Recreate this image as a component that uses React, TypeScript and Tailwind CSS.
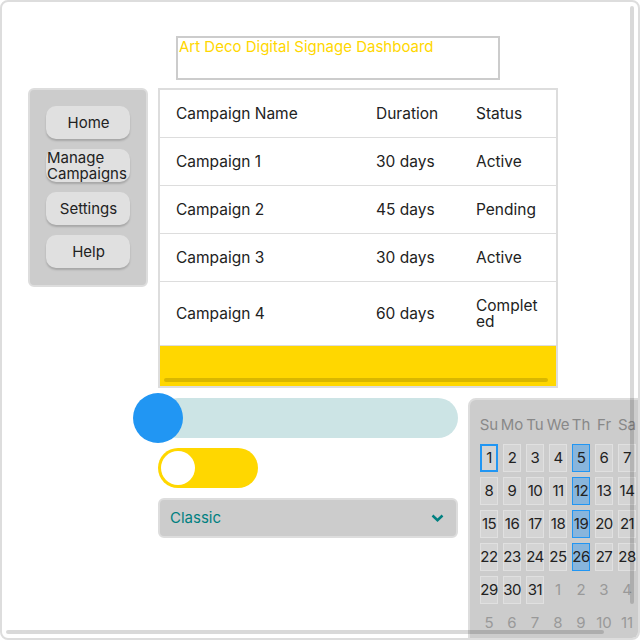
import React from "react";

const font = { fontFamily: "Inter, 'Noto Sans', sans-serif" };

const rows = [
  { name: "Campaign 1", duration: "30 days", status: "Active" },
  { name: "Campaign 2", duration: "45 days", status: "Pending" },
  { name: "Campaign 3", duration: "30 days", status: "Active" },
  { name: "Campaign 4", duration: "60 days", status: "Completed" },
];

const navItems = ["Home", "Manage Campaigns", "Settings", "Help"];

function Sidebar() {
  return (
    <nav className="w-[120px] shrink-0 self-start rounded-md border-2 border-[#ddd] bg-[#ccc] px-4 pt-4 pb-[17px] flex flex-col gap-[10px]">
      {navItems.map((item) => (
        <button
          key={item}
          className="h-[33px] w-[84px] rounded-[10px] bg-[#e0e0e0] shadow-[0_2px_2px_rgba(0,0,0,0.18)] flex items-center justify-center text-[15px] leading-[16px] text-[#222]"
        >
          <span className="inline-block max-w-[84px] pl-px text-left">{item}</span>
        </button>
      ))}
    </nav>
  );
}

function CampaignTable() {
  return (
    <div className="relative w-[400px] h-[300px] border-2 border-[#ddd] bg-[#FFD700] overflow-hidden">
      <div className="bg-white text-[15.5px] text-[#222]">
        <div className="flex h-[48px] items-center border-b border-[#ddd]">
          <div className="w-[200px] px-4">Campaign Name</div>
          <div className="w-[100px] px-4">Duration</div>
          <div className="w-[95px] px-4">Status</div>
        </div>
        {rows.map((r, i) => (
          <div
            key={r.name}
            className={`flex items-center border-b border-[#ddd] ${i === 3 ? "h-[64px]" : "h-[48px]"}`}
          >
            <div className="w-[200px] px-4">{r.name}</div>
            <div className="w-[100px] px-4">{r.duration}</div>
            <div className="w-[95px] px-4 break-all leading-[16px]">{r.status}</div>
          </div>
        ))}
      </div>
      {/* horizontal scrollbar thumb */}
      <div className="absolute left-[4px] bottom-[4px] h-[4px] w-[384px] rounded-full bg-black/15" />
    </div>
  );
}

function Controls() {
  return (
    <div className="w-[300px] flex flex-col gap-[10px]">
      <div className="relative h-[40px] w-[300px] rounded-full bg-[#cce4e5]">
        <div className="absolute left-[-25px] top-[-5px] h-[50px] w-[50px] rounded-full bg-[#2196F3]" />
      </div>
      <div className="h-[40px] w-[100px] rounded-full bg-[#FFD700] p-[3px]">
        <div className="h-[34px] w-[34px] rounded-full bg-white" />
      </div>
      <div className="h-[40px] w-[300px] rounded-md border-2 border-[#ddd] bg-[#ccc] flex items-center justify-between pl-[10px] pr-[12px]">
        <span className="text-[15px] text-[#008080]">Classic</span>
        <svg width="13" height="8" viewBox="0 0 13 8">
          <polyline points="1.5,1.5 6.5,6.2 11.5,1.5" fill="none" stroke="#008080" strokeWidth="2.5" />
        </svg>
      </div>
    </div>
  );
}

const days = ["Su", "Mo", "Tu", "We", "Th", "Fr", "Sa"];

function Calendar() {
  const cells: { n: number; cur: boolean }[] = [];
  for (let d = 1; d <= 31; d++) cells.push({ n: d, cur: true });
  for (let d = 1; d <= 11; d++) cells.push({ n: d, cur: false });

  return (
    <div className="w-[180px] shrink-0 rounded-tl-lg border-2 border-[#ddd] bg-[#ccc] pl-[10px] pt-[18px] pb-4">
      <div className="grid grid-cols-[repeat(7,18px)] gap-x-[5px] gap-y-[5px] text-[15px]">
        {days.map((d) => (
          <div key={d} className="flex justify-center text-[#888] leading-[14px] whitespace-nowrap mb-[7px]">
            {d}
          </div>
        ))}
        {cells.map((c, i) => {
          if (!c.cur) {
            return (
              <div key={i} className="h-[28px] flex items-center justify-center text-[#999] whitespace-nowrap">
                {c.n}
              </div>
            );
          }
          const thu = i % 7 === 4;
          const today = c.n === 1;
          return (
            <div
              key={i}
              className={`h-[28px] flex items-center justify-center whitespace-nowrap tracking-[-0.5px] text-[#222] ${
                today
                  ? "border-2 border-[#2196F3] bg-[#d4d4d4]"
                  : thu
                  ? "border border-[#2196F3] bg-[#88b5dc]"
                  : "border border-[#e0e0e0] bg-[#d4d4d4]"
              }`}
            >
              {c.n}
            </div>
          );
        })}
      </div>
    </div>
  );
}

export default function App() {
  return (
    <div style={font} className="relative w-[640px] h-[640px] overflow-hidden rounded-lg border-2 border-[#ddd] bg-white">
      <div className="pl-[26px] pt-[34px]">
        <div className="ml-[148px] h-[44px] w-[324px] border-2 border-[#ccc] px-px text-[15px] leading-[18px] text-[#FFD700]">
          Art Deco Digital Signage Dashboard
        </div>
        <div className="mt-[8px] flex gap-[10px]">
          <Sidebar />
          <CampaignTable />
        </div>
        <div className="mt-[10px] ml-[130px] flex gap-[10px]">
          <Controls />
          <Calendar />
        </div>
      </div>
      {/* page scrollbar thumbs */}
      <div className="absolute right-[4px] top-[4px] h-[598px] w-[4px] rounded-full bg-black/15" />
      <div className="absolute left-[4px] bottom-[4px] h-[4px] w-[598px] rounded-full bg-black/15" />
    </div>
  );
}
